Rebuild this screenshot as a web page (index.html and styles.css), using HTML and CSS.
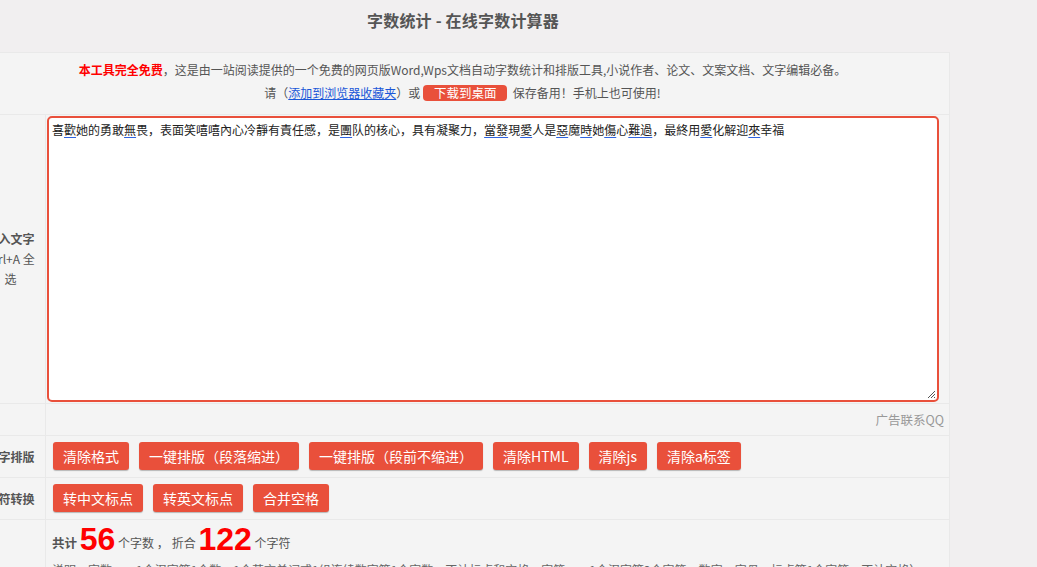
FILE: index.html
```html
<!DOCTYPE html>
<html lang="zh-CN">
<head>
<meta charset="utf-8">
<title>字数统计 - 在线字数计算器</title>
<link rel="stylesheet" href="styles.css">
</head>
<body>
<div class="page">
  <header class="head">
    <h1 class="title">字数统计 - 在线字数计算器</h1>
  </header>

  <div class="sheet">
    <div class="notice">
      <p class="notice-line"><b class="free">本工具完全免费</b>，这是由一站阅读提供的一个免费的网页版Word,Wps文档自动字数统计和排版工具,小说作者、论文、文案文档、文字编辑必备。</p>
      <p class="notice-line">请（<a class="fav" href="#">添加到浏览器收藏夹</a>）或 <span class="dl-btn">下载到桌面</span> &nbsp;保存备用！手机上也可使用!</p>
    </div>

    <div class="row row-input">
      <div class="label"><b>输入文字</b><span>Ctrl+A 全选</span></div>
      <div class="cell cell-input">
        <div class="editor" contenteditable="true">喜<u>歡</u>她的勇敢<u>無</u>畏，表面笑嘻嘻內心冷靜有責任感，是<u>團</u>队的核心，具有凝聚力，<u>當發</u>現<u>愛</u>人是<u>惡</u>魔<u>時</u>她<u>傷</u>心<u>難過</u>，最終用<u>愛</u>化解迎<u>來</u>幸福<span class="grip"><svg width="9" height="9" viewBox="0 0 9 9"><path d="M8 1 L1 8 M8 4 L4 8 M8 7 L7 8" stroke="#555" stroke-width="1" fill="none"/></svg></span></div>
      </div>
    </div>

    <div class="row row-ad">
      <div class="label"></div>
      <div class="cell cell-ad">广告联系QQ</div>
    </div>

    <div class="row row-tools">
      <div class="label"><b>文字排版</b></div>
      <div class="cell cell-btns">
        <button class="btn">清除格式</button>
        <button class="btn">一键排版（段落缩进）</button>
        <button class="btn">一键排版（段前不缩进）</button>
        <button class="btn">清除HTML</button>
        <button class="btn">清除js</button>
        <button class="btn">清除a标签</button>
      </div>
    </div>

    <div class="row row-tools">
      <div class="label"><b>字符转换</b></div>
      <div class="cell cell-btns">
        <button class="btn">转中文标点</button>
        <button class="btn">转英文标点</button>
        <button class="btn">合并空格</button>
      </div>
    </div>

    <div class="row row-count">
      <div class="label"></div>
      <div class="cell cell-count">
        <p class="total"><b>共计</b> <span class="num">56</span> 个字数 <span class="sep">，</span>折合 <span class="num">122</span> 个字符</p>
        <p class="note">说明：字数——1个汉字算1个数，1个英文单词或1组连续数字算1个字数，不计标点和空格；字符——1个汉字算2个字符，数字、字母、标点算1个字符，不计空格）</p>
      </div>
    </div>
  </div>
</div>
</body>
</html>
```

FILE: styles.css
```css
html, body {
  margin: 0;
  padding: 0;
}

body {
  background: #f1eff0;
  font-family: "Noto Sans CJK SC", "Noto Sans", sans-serif;
  color: #555;
  overflow: hidden;
}

.page {
  width: 974px;
  margin-left: -24px;
}

.head {
  height: 52px;
  display: flex;
  align-items: center;
  justify-content: center;
}

.title {
  margin: 0 0 12px;
  font-size: 16px;
  font-weight: bold;
  color: #555;
  letter-spacing: 0.2px;
}

.sheet {
  background: #f4f4f4;
  border-top: 1px solid #e9e9e9;
  border-right: 1px solid #e9e9e9;
}

.notice {
  height: 61px;
  padding-top: 5px;
  box-sizing: border-box;
  text-align: center;
  font-size: 12px;
}

.notice-line {
  margin: 0;
  line-height: 23px;
}

.free {
  color: #f00;
}

.fav {
  color: #1a57d8;
  text-decoration: underline;
}

.dl-btn {
  display: inline-block;
  background: #e9503b;
  color: #fff;
  border-radius: 4px;
  padding: 0 11px;
  line-height: 16px;
  font-size: 12.5px;
  vertical-align: 0;
}

.row {
  display: grid;
  grid-template-columns: 70px 1fr;
  border-top: 1px solid #e9e9e9;
}

.label {
  border-right: 1px solid #e9e9e9;
  display: flex;
  flex-direction: column;
  align-items: center;
  justify-content: center;
  text-align: center;
  font-size: 12px;
  line-height: 20px;
  color: #555;
  padding: 0 7px;
}

.label b {
  color: #555;
  white-space: nowrap;
}

.cell-input {
  padding: 1px 10px 1px 1px;
}

.editor {
  height: 286px;
  box-sizing: border-box;
  border: 2px solid #e9503b;
  border-radius: 5px;
  background: #fff;
  padding: 4px 3px;
  font-size: 12px;
  line-height: 16px;
  color: #222;
  outline: none;
  position: relative;
}

.editor u {
  text-decoration: underline 1px #2f63e0;
  text-underline-offset: 2px;
}

.grip {
  position: absolute;
  right: 1px;
  bottom: 1px;
  width: 9px;
  height: 9px;
  display: flex;
}

.cell-ad {
  height: 31px;
  display: flex;
  align-items: center;
  justify-content: flex-end;
  padding-right: 5px;
  font-size: 12.5px;
  color: #999;
}

.cell-btns {
  height: 41px;
  box-sizing: border-box;
  padding: 6px 7px 0;
  display: flex;
  gap: 10px;
  align-items: flex-start;
}

.btn {
  height: 28px;
  padding: 0 10px;
  border: 0;
  border-radius: 3px;
  background: #e9503b;
  color: #fff;
  font-family: "Noto Sans CJK SC", "Noto Sans", sans-serif;
  font-size: 14px;
  line-height: 28px;
  box-shadow: 0 1px 1px rgba(0, 0, 0, 0.25);
  cursor: pointer;
}

.cell-count {
  padding: 0 6px;
}

.total {
  margin: 0;
  padding-top: 1px;
  font-size: 12px;
  line-height: 36px;
  color: #555;
}

.total b {
  font-size: 12.5px;
}

.sep {
  margin-right: 3px;
}

.num {
  font-family: "Liberation Sans", Arial, sans-serif;
  font-size: 32px;
  font-weight: bold;
  color: #f00;
  vertical-align: -2px;
}

.note {
  margin: 0;
  font-size: 12px;
  line-height: 18px;
  color: #666;
  white-space: nowrap;
}
```
